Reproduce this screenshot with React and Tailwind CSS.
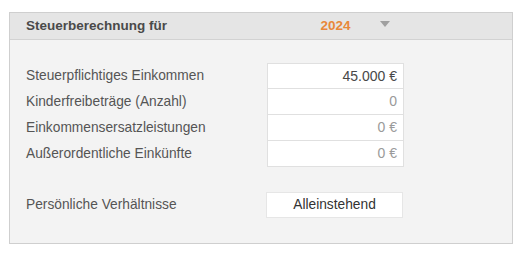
import React from "react";

const rows = [
  { label: "Steuerpflichtiges Einkommen", value: "45.000 €", dark: true },
  { label: "Kinderfreibeträge (Anzahl)", value: "0" },
  { label: "Einkommensersatzleistungen", value: "0 €" },
  { label: "Außerordentliche Einkünfte", value: "0 €" },
];

export default function App() {
  return (
    <div className="w-[525px] h-[256px] bg-white pt-[12px] pl-[9px]" style={{ fontFamily: '"Liberation Sans", Arial, sans-serif' }}>
      <div className="w-[504px] border border-[#cfcfcf] bg-[#f3f3f3]">
        <div className="flex items-center h-[27px] bg-[#e5e5e5] border-b border-[#d2d2d2] pl-[16px]">
          <div className="w-[241px] text-[13.5px] font-bold text-[#4a4a4a]">Steuerberechnung für</div>
          <div className="relative w-[137px] text-center text-[13.5px] font-bold text-[#e8883a]">
            2024
            <span className="absolute left-[113px] top-[5px] w-0 h-0 border-l-[5px] border-r-[5px] border-t-[6px] border-l-transparent border-r-transparent border-t-[#a0a0a0]"></span>
          </div>
        </div>
        <div className="pt-[23px] pb-[25px] pl-[16px]">
          <div className="flex flex-col">
            {rows.map((r, i) => (
              <div key={i} className="flex items-center h-[26px]">
                <div className="w-[241px] text-[13.75px] text-[#555]">{r.label}</div>
                <div className={`w-[137px] h-[26px] bg-white border-l border-r border-[#e0e0e0] ${i === 0 ? "border-t" : ""} border-b flex items-center justify-end pr-[6px] text-[14px] ${r.dark ? "text-[#484848]" : "text-[#9a9a9a]"}`}>
                  {r.value}
                </div>
              </div>
            ))}
          </div>
          <div className="flex items-center h-[26px] mt-[25px]">
            <div className="w-[240px] text-[13.75px] text-[#555]">Persönliche Verhältnisse</div>
            <div className="w-[137px] h-[26px] bg-white border border-[#e6e6e6] flex items-center justify-center text-[13.75px] text-[#333]">
              Alleinstehend
            </div>
          </div>
        </div>
      </div>
    </div>
  );
}
